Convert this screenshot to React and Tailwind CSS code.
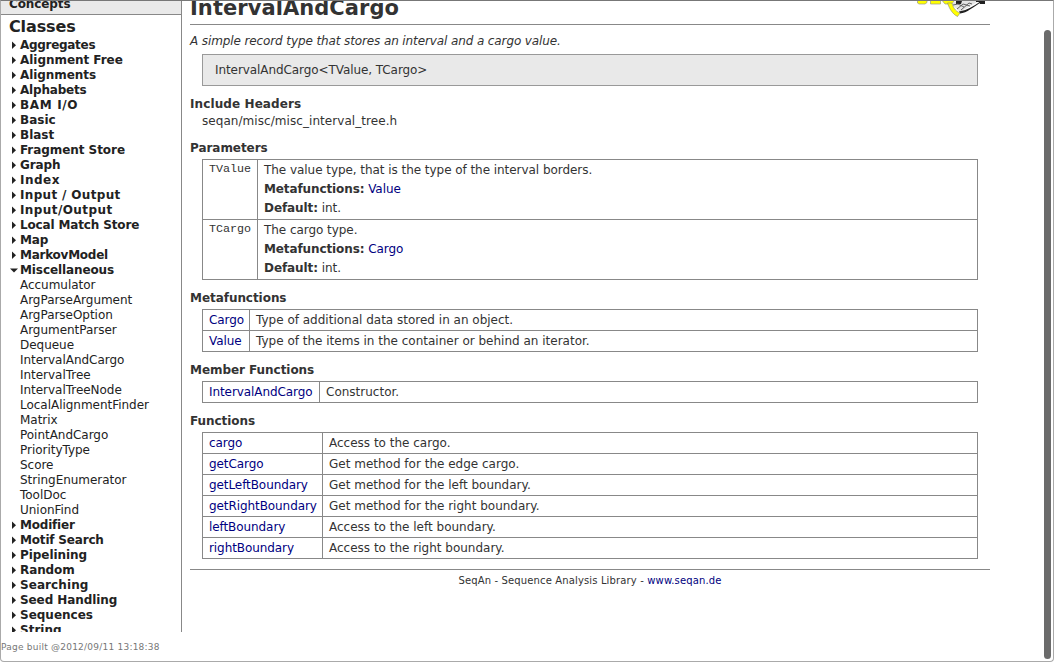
import React from "react";

const topGroups = [
  ["Aggregates", "tracking-[-0.300px]"], ["Alignment Free", "tracking-[-0.040px]"], ["Alignments", "tracking-[-0.060px]"],
  ["Alphabets", "tracking-[-0.200px]"], ["BAM I/O", "tracking-[0.650px]"], ["Basic", ""], ["Blast", ""],
  ["Fragment Store", "tracking-[-0.060px]"], ["Graph", "tracking-[-0.100px]"], ["Index", "tracking-[0.500px]"], ["Input / Output", "tracking-[0.330px]"],
  ["Input/Output", "tracking-[0.410px]"], ["Local Match Store", "tracking-[-0.150px]"],
  ["Map", "tracking-[-0.200px]"], ["MarkovModel", "tracking-[-0.250px]"],
];
const miscItems = [
  "Accumulator", "ArgParseArgument", "ArgParseOption", "ArgumentParser", "Dequeue",
  "IntervalAndCargo", "IntervalTree", "IntervalTreeNode", "LocalAlignmentFinder", "Matrix",
  "PointAndCargo", "PriorityType", "Score", "StringEnumerator", "ToolDoc", "UnionFind",
];
const bottomGroups = [
  ["Modifier", "tracking-[-0.200px]"], ["Motif Search", "tracking-[-0.180px]"], ["Pipelining", "tracking-[-0.050px]"],
  ["Random", "tracking-[-0.100px]"], ["Searching", "tracking-[0.080px]"], ["Seed Handling", "tracking-[-0.080px]"],
  ["Sequences", ""], ["String", ""],
];

function Group({ name, track = "", open }) {
  return (
    <li className="flex h-[15px] items-center font-bold">
      <svg className="mr-[2px] ml-[9px] h-[9px] w-[8px] shrink-0" viewBox="0 0 8 9" fill="#222">
        {open ? <path d="M0 2.500h8L4 6.500z" /> : <path d="M2 0.500v7.500l4-3.750z" />}
      </svg>
      <span className={track}>{name}</span>
    </li>
  );
}

function Link({ children }) {
  return <a className="text-[#000080]">{children}</a>;
}

function Title({ children }) {
  return <h2 className="h-[29px] pt-[10px] text-[12px] leading-[16px] font-bold tracking-[-0.050px]">{children}</h2>;
}

function Table({ rows, col }) {
  return (
    <div className="mx-[12px] border-x border-b border-[#888]">
      {rows.map(([name, text]) => (
        <div key={name} className="flex h-[21px] border-t border-[#888] leading-[20px]">
          <div className={`${col} shrink-0 border-r border-[#888] pl-[6px] tracking-[-0.080px]`}><Link>{name}</Link></div>
          <div className="pl-[6px]">{text}</div>
        </div>
      ))}
    </div>
  );
}

function Param({ name, text, meta }) {
  return (
    <div className="flex h-[60px] border-t border-[#888]">
      <div className="w-[55px] shrink-0 border-r border-[#888] pl-[6px] font-['Liberation_Mono','Courier_New',monospace] text-[11.700px] leading-[18px]">{name}</div>
      <div className="pt-px pl-[6px] leading-[19px] tracking-[-0.050px]">
        <p>{text}</p>
        <p><b className="tracking-[-0.110px]">Metafunctions:</b> <Link>{meta}</Link></p>
        <p><b className="tracking-[-0.080px]">Default:</b> int.</p>
      </div>
    </div>
  );
}

export default function App() {
  return (
    <div className="relative flex h-[662px] w-[1054px] overflow-hidden rounded-b-[4px] border border-t-[#777] border-r-[#aaa] border-b-[#aaa] border-l-[#aaa] bg-white font-['DejaVu_Sans',Verdana,sans-serif] text-[12px] text-[#333]">
      <aside className="w-[181px] shrink-0 text-[#222]">
        <div className="h-[631px] overflow-hidden border-r border-[#888]">
          <div className="h-[14px] overflow-hidden border-b border-[#888] bg-[#e9e9e9] pl-[8px] font-bold">
            <div className="-mt-[6px] leading-[18px] tracking-[-0.100px]">Concepts</div>
          </div>
          <h2 className="h-[23px] pl-[8px] text-[16px] leading-[23px] font-bold tracking-[-0.120px]">Classes</h2>
          <ul className="leading-[15px]">
            {topGroups.map(([g, t]) => <Group key={g} name={g} track={t} />)}
            <Group name="Miscellaneous" track="tracking-[-0.100px]" open />
            {miscItems.map((m) => <li key={m} className="h-[15px] pl-[19px] tracking-[-0.030px]">{m}</li>)}
            {bottomGroups.map(([g, t]) => <Group key={g} name={g} track={t} />)}
          </ul>
        </div>
        <p className="mt-[7px] text-[9px] leading-[16px] tracking-[0.230px] whitespace-nowrap text-[#777]">Page built @2012/09/11 13:18:38</p>
      </aside>

      <main className="ml-[8px] w-[800px] shrink-0">
        <header className="flex h-[24px] justify-between overflow-hidden border-b border-[#888]">
          <h1 className="-mt-[8px] text-[21px] leading-[30px] font-bold tracking-[0.060px]">IntervalAndCargo</h1>
          <svg className="mr-[3px] h-[16px] w-[70px]" viewBox="0 0 70 16">
            <path d="M0.500 0v2l1.500 1h6l2-1.500V0M13.500 0v3h10V0M25.500 0l2.500 3h7l2-3" fill="#ff0" stroke="#998" strokeWidth="0.700" />
            <path d="M34 3l6-3h22L43 11z" fill="#e4e4e4" />
            <path d="M39 0h6l-1 3h-5zM59 0h9v3h-5l-1-2h-3z" fill="#222" />
            <path d="M36 4l5-1 6 3M40 8l6-5 7 2M44 9l8-7 3 1" fill="none" stroke="#555" strokeWidth="0.900" />
            <path d="M64 0C57 5 51 9 42 10.500l1 2C50 12 56 6 66 0z" fill="#222" />
            <path d="M30.500 2c2 6 5 11 10 13.500l2.500-3.500c-5-2-7-6-8-10z" fill="#ff0" stroke="#887" strokeWidth="0.600" />
          </svg>
        </header>
        <p className="h-[29px] pt-[8px] leading-[16px] tracking-[-0.110px] italic">A simple record type that stores an interval and a cargo value.</p>
        <div className="mx-[12px] h-[32px] border border-[#999] bg-[#e9e9e9] pl-[12px] leading-[30px] tracking-[-0.080px]">IntervalAndCargo&lt;TValue, TCargo&gt;</div>
        <h2 className="h-[27px] pt-[10px] leading-[16px] font-bold tracking-[0.100px]">Include Headers</h2>
        <p className="h-[17px] pl-[12px] leading-[16px] tracking-[0.060px]">seqan/misc/misc_interval_tree.h</p>
        <Title>Parameters</Title>
        <div className="mx-[12px] border-x border-b border-[#888]">
          <Param name="TValue" text="The value type, that is the type of the interval borders." meta="Value" />
          <Param name="TCargo" text="The cargo type." meta="Cargo" />
        </div>
        <Title>Metafunctions</Title>
        <Table col="w-[47px]" rows={[["Cargo", "Type of additional data stored in an object."], ["Value", "Type of the items in the container or behind an iterator."]]} />
        <Title>Member Functions</Title>
        <Table col="w-[117px]" rows={[["IntervalAndCargo", "Constructor."]]} />
        <Title>Functions</Title>
        <Table
          col="w-[120px]"
          rows={[
            ["cargo", "Access to the cargo."],
            ["getCargo", "Get method for the edge cargo."],
            ["getLeftBoundary", "Get method for the left boundary."],
            ["getRightBoundary", "Get method for the right boundary."],
            ["leftBoundary", "Access to the left boundary."],
            ["rightBoundary", "Access to the right boundary."],
          ]}
        />
        <footer className="mt-[10px] border-t border-[#888] pt-[3px] text-center text-[10px] leading-[15px] tracking-[0.140px]">
          SeqAn - Sequence Analysis Library - <Link>www.seqan.de</Link>
        </footer>
      </main>

      <div className="mt-[29px] mr-[2px] ml-auto h-[629px] w-[7px] shrink-0 rounded-full bg-[#6b6b6b]" />
    </div>
  );
}
